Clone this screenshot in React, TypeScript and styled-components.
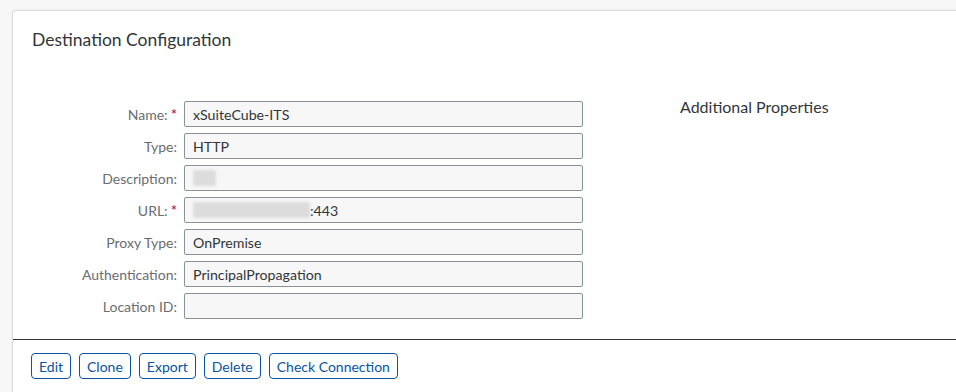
import { type FC } from "react";
import styled, { createGlobalStyle } from "styled-components";

const GlobalStyle = createGlobalStyle`
  html, body {
    margin: 0;
    padding: 0;
    background: #f7f7f7;
    overflow: hidden;
  }
  body {
    font-family: Lato, "Liberation Sans", Arial, sans-serif;
    color: #32363a;
  }
`;

const Page = styled.div`
  width: 956px;
  height: 392px;
  padding: 10px 0 0 12px;
  box-sizing: border-box;
`;

const Card = styled.section`
  width: 960px;
  height: 400px;
  background: #fff;
  border: 1px solid #dcdcdc;
  border-right: none;
  border-radius: 4px 0 0 0;
  box-shadow: 0 0 2px rgba(0, 0, 0, 0.08);
  box-sizing: border-box;
  display: flex;
  flex-direction: column;
`;

const Title = styled.h2`
  margin: 0;
  padding: 19px 0 0 19px;
  font-size: 17.5px;
  line-height: 20px;
  font-weight: 400;
  color: #32363a;
`;

const Body = styled.div`
  display: flex;
  padding: 51px 0 0 19px;
  gap: 97px;
`;

const Form = styled.div`
  display: flex;
  flex-direction: column;
  gap: 6px;
`;

const Row = styled.div`
  display: flex;
  align-items: center;
  gap: 7px;
`;

const Label = styled.div`
  width: 145px;
  text-align: right;
  font-size: 14px;
  color: #6a6d70;
  white-space: nowrap;
`;

const Required = styled.span`
  color: #bb0000;
  margin-left: 3px;
  font-size: 15px;
`;

const Field = styled.div`
  width: 399px;
  height: 26px;
  box-sizing: border-box;
  background: #f7f7f7;
  border: 1px solid #89919a;
  border-radius: 2px;
  padding: 0 8px;
  display: flex;
  align-items: center;
  font-size: 14.2px;
  color: #32363a;
`;

const Redacted = styled.span<{ $w: number }>`
  display: inline-block;
  width: ${({ $w }) => $w}px;
  height: 16px;
  background: #dcdcdc;
  filter: blur(1.5px);
  border-radius: 2px;
`;

const SideTitle = styled.div`
  font-size: 16px;
  color: #32363a;
  margin-top: -4px;
`;

const Divider = styled.hr`
  margin: 20px 0 0 0;
  border: none;
  border-top: 1px solid #32363a;
  height: 0;
`;

const Toolbar = styled.div`
  display: flex;
  gap: 8px;
  padding: 13px 0 0 18px;
`;

const Button = styled.button`
  height: 26px;
  padding: 0 7px;
  background: #fff;
  border: 1px solid #0854a0;
  border-radius: 4px;
  color: #0854a0;
  font-family: inherit;
  font-size: 14px;
  cursor: pointer;
`;

type FieldRow = {
  label: string;
  value?: string;
  required?: boolean;
  redact?: number;
  suffix?: string;
};

const rows: FieldRow[] = [
  { label: "Name:", value: "xSuiteCube-ITS", required: true },
  { label: "Type:", value: "HTTP" },
  { label: "Description:", redact: 23 },
  { label: "URL:", redact: 117, suffix: ":443", required: true },
  { label: "Proxy Type:", value: "OnPremise" },
  { label: "Authentication:", value: "PrincipalPropagation" },
  { label: "Location ID:" },
];

const App: FC = () => {
  return (
    <Page>
      <GlobalStyle />
      <Card>
        <Title>Destination Configuration</Title>
        <Body>
          <Form>
            {rows.map((row) => (
              <Row key={row.label}>
                <Label>
                  {row.label}
                  {row.required && <Required>*</Required>}
                </Label>
                <Field>
                  {row.redact && <Redacted $w={row.redact} />}
                  {row.suffix}
                  {row.value}
                </Field>
              </Row>
            ))}
          </Form>
          <SideTitle>Additional Properties</SideTitle>
        </Body>
        <Divider />
        <Toolbar>
          <Button>Edit</Button>
          <Button>Clone</Button>
          <Button>Export</Button>
          <Button>Delete</Button>
          <Button>Check Connection</Button>
        </Toolbar>
      </Card>
    </Page>
  );
};

export default App;
